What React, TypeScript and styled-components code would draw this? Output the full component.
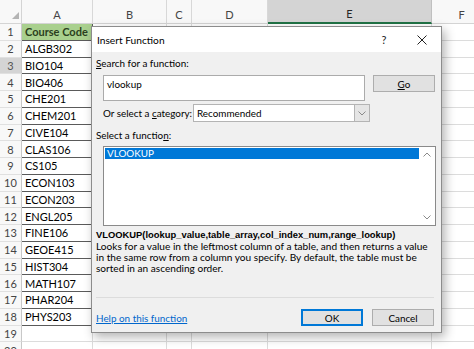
import React from "react";
import styled, { createGlobalStyle } from "styled-components";

const GlobalStyle = createGlobalStyle`
  html, body {
    margin: 0;
    padding: 0;
    background: #ffffff;
    overflow: hidden;
  }
  body {
    font-family: Lato, "Liberation Sans", sans-serif;
  }
`;

const UI_FONT = `Lato, "Noto Sans", "Liberation Sans", sans-serif`;

const columns = [
  { key: "A", width: 71 },
  { key: "B", width: 74 },
  { key: "C", width: 25 },
  { key: "D", width: 76 },
  { key: "E", width: 164 },
  { key: "F", width: 60 },
];

const courseCodes = [
  "ALGB302",
  "BIO104",
  "BIO406",
  "CHE201",
  "CHEM201",
  "CIVE104",
  "CLAS106",
  "CS105",
  "ECON103",
  "ECON203",
  "ENGL205",
  "FINE106",
  "GEOE415",
  "HIST304",
  "MATH107",
  "PHAR204",
  "PHYS203",
];

const descriptionLines = [
  "Looks for a value in the leftmost column of a table, and then returns a value",
  "in the same row from a column you specify. By default, the table must be",
  "sorted in an ascending order.",
];

const ACTIVE_ROW = 3;
const ACTIVE_COL = "E";
const ROW_COUNT = 20;

const Page = styled.div`
  position: relative;
  width: 474px;
  height: 349px;
  overflow: hidden;
`;

const Sheet = styled.div`
  display: grid;
  grid-template-columns: 22px ${columns.map((c) => `${c.width}px`).join(" ")};
  grid-template-rows: 24px repeat(${ROW_COUNT}, 16.75px);
  font-family: Lato, "Liberation Sans", sans-serif;
  font-size: 11px;
  color: #000;
`;

const Corner = styled.div`
  box-sizing: border-box;
  background: #f8f8f8;
  border-right: 1px solid #d4d4d4;
  border-bottom: 1px solid #d4d4d4;
  display: flex;
  align-items: flex-end;
  justify-content: flex-end;
  padding: 0 2px 4px 0;
`;

const ColHead = styled.div<{ $active?: boolean }>`
  box-sizing: border-box;
  background: ${(p) => (p.$active ? "#d4d4d4" : "#f8f8f8")};
  border-right: 1px solid ${(p) => (p.$active ? "#c0c0c0" : "#d8d8d8")};
  border-bottom: ${(p) => (p.$active ? "2px solid #217346" : "1px solid #d4d4d4")};
  color: ${(p) => (p.$active ? "#262626" : "#444444")};
  display: flex;
  align-items: center;
  justify-content: center;
  padding-top: 5px;
`;

const RowHead = styled.div<{ $active?: boolean }>`
  box-sizing: border-box;
  background: ${(p) => (p.$active ? "#d4d4d4" : "#f8f8f8")};
  border-right: 1px solid #c8c8c8;
  border-bottom: 1px solid #e0e0e0;
  color: ${(p) => (p.$active ? "#555555" : "#444444")};
  display: flex;
  align-items: center;
  justify-content: center;
`;

const Cell = styled.div<{ $boxed?: boolean; $header?: boolean }>`
  box-sizing: border-box;
  border-right: 1px solid ${(p) => (p.$boxed ? "#5a5a5a" : "#dcdcdc")};
  border-bottom: 1px solid ${(p) => (p.$boxed ? "#5a5a5a" : "#dcdcdc")};
  background: ${(p) => (p.$header ? "#a9d08e" : "#ffffff")};
  font-weight: ${(p) => (p.$header ? 700 : 400)};
  color: ${(p) => (p.$header ? "#2b3f20" : "#000000")};
  display: flex;
  align-items: center;
  padding-left: 3px;
  white-space: nowrap;
  overflow: hidden;
`;

/* ---------- dialog ---------- */

const Dialog = styled.div`
  position: absolute;
  left: 91px;
  top: 26px;
  width: 351px;
  height: 307px;
  box-sizing: border-box;
  border: 1px solid #8c8c8c;
  background: #f0f0f0;
  box-shadow: 3px 4px 10px rgba(0, 0, 0, 0.3);
  display: flex;
  flex-direction: column;
  font-family: ${UI_FONT};
  font-size: 9.9px;
  color: #000;
`;

const TitleBar = styled.div`
  height: 25px;
  background: #ffffff;
  display: flex;
  align-items: center;
  padding-left: 5px;
  font-size: 10.2px;
`;

const Title = styled.span`
  flex: 1;
`;

const TitleButton = styled.span`
  width: 38px;
  display: flex;
  justify-content: center;
  align-items: center;
  font-size: 11px;
  color: #222;
`;

const Body = styled.div`
  flex: 1;
  display: flex;
  flex-direction: column;
  padding: 0 6px 6px 4px;
`;

const Label = styled.div<{ $top: number }>`
  line-height: 12px;
  margin-top: ${(p) => p.$top}px;
`;

const Key = styled.span`
  text-decoration: underline;
  text-underline-offset: 1px;
`;

const SearchRow = styled.div`
  display: flex;
  align-items: flex-start;
  gap: 8px;
  margin-top: 6px;
  padding-left: 7px;
`;

const SearchBox = styled.div`
  flex: 1;
  height: 26px;
  box-sizing: border-box;
  background: #ffffff;
  border: 1px solid #ababab;
  padding: 2px 3px;
  line-height: 12px;
`;

const Button = styled.div<{ $default?: boolean }>`
  width: 62px;
  height: 17px;
  box-sizing: border-box;
  background: #e1e1e1;
  border: 1px solid ${(p) => (p.$default ? "#0078d7" : "#adadad")};
  box-shadow: ${(p) => (p.$default ? "inset 0 0 0 1px #0078d7" : "none")};
  display: flex;
  align-items: center;
  justify-content: center;
`;

const CategoryRow = styled.div`
  display: flex;
  align-items: center;
  margin-top: 3px;
  padding-left: 7px;
  width: 267px;
`;

const CategoryLabel = styled.span`
  width: 90px;
`;

const Select = styled.div`
  flex: 1;
  height: 18px;
  box-sizing: border-box;
  background: #ffffff;
  border: 1px solid #b4b4b4;
  display: flex;
  align-items: center;
  padding-left: 3px;
`;

const SelectText = styled.span`
  flex: 1;
`;

const SelectArrow = styled.span`
  width: 14px;
  height: 100%;
  background: #e5e5e5;
  border-left: 1px solid #b4b4b4;
  display: flex;
  align-items: center;
  justify-content: center;
`;

const ListBox = styled.div`
  margin: 5px 0 0 7px;
  width: 333px;
  height: 80px;
  box-sizing: border-box;
  background: #ffffff;
  border: 1px solid #8a8a8a;
  display: flex;
  padding: 1px;
`;

const ListItems = styled.div`
  flex: 1;
`;

const ListItem = styled.div<{ $selected?: boolean }>`
  height: 11px;
  line-height: 11px;
  padding-left: 2px;
  background: ${(p) => (p.$selected ? "#0078d7" : "transparent")};
  color: ${(p) => (p.$selected ? "#ffffff" : "#000")};
`;

const ScrollBar = styled.div`
  width: 15px;
  display: flex;
  flex-direction: column;
  justify-content: space-between;
  align-items: center;
  padding: 4px 0 4px;
`;

const Syntax = styled.div`
  margin-top: 3px;
  line-height: 12px;
  font-family: "Liberation Sans", Arial, sans-serif;
  font-size: 9.4px;
  font-weight: 700;
  white-space: nowrap;
`;

const DescriptionLine = styled.div`
  line-height: 11px;
  font-size: 10.1px;
  white-space: nowrap;
`;

const Footer = styled.div`
  margin-top: auto;
  border-top: 1px solid #dcdcdc;
  padding-top: 11px;
  display: flex;
  align-items: center;
  gap: 9px;
  margin-right: 1px;
`;

const HelpLink = styled.a`
  flex: 1;
  color: #0066cc;
  text-decoration: underline;
  text-underline-offset: 1px;
  cursor: pointer;
`;

function Chevron({ up }: { up?: boolean }) {
  return (
    <svg width="8" height="5" viewBox="0 0 8 5">
      <path
        d={up ? "M0.5 4.5 L4 1 L7.5 4.5" : "M0.5 0.5 L4 4 L7.5 0.5"}
        fill="none"
        stroke="#8a8a8a"
        strokeWidth="1"
      />
    </svg>
  );
}

function CloseIcon() {
  return (
    <svg width="10" height="10" viewBox="0 0 10 10">
      <path d="M0.5 0.5 L9.5 9.5 M9.5 0.5 L0.5 9.5" stroke="#222" strokeWidth="1" />
    </svg>
  );
}

function InsertFunctionDialog() {
  return (
    <Dialog>
      <TitleBar>
        <Title>Insert Function</Title>
        <TitleButton>?</TitleButton>
        <TitleButton>
          <CloseIcon />
        </TitleButton>
      </TitleBar>
      <Body>
        <Label $top={5}>
          <Key>S</Key>earch for a function:
        </Label>
        <SearchRow>
          <SearchBox>vlookup</SearchBox>
          <Button>
            <span>
              <Key>G</Key>o
            </span>
          </Button>
        </SearchRow>
        <CategoryRow>
          <CategoryLabel>
            Or select a <Key>c</Key>ategory:
          </CategoryLabel>
          <Select>
            <SelectText>Recommended</SelectText>
            <SelectArrow>
              <Chevron />
            </SelectArrow>
          </Select>
        </CategoryRow>
        <Label $top={7}>
          Select a functio<Key>n</Key>:
        </Label>
        <ListBox>
          <ListItems>
            <ListItem $selected>VLOOKUP</ListItem>
          </ListItems>
          <ScrollBar>
            <Chevron up />
            <Chevron />
          </ScrollBar>
        </ListBox>
        <Syntax>VLOOKUP(lookup_value,table_array,col_index_num,range_lookup)</Syntax>
        {descriptionLines.map((line) => (
          <DescriptionLine key={line}>{line}</DescriptionLine>
        ))}
        <Footer>
          <HelpLink>Help on this function</HelpLink>
          <Button $default>OK</Button>
          <Button>Cancel</Button>
        </Footer>
      </Body>
    </Dialog>
  );
}

function Spreadsheet() {
  const rows = Array.from({ length: ROW_COUNT }, (_, i) => i + 1);
  return (
    <Sheet>
      <Corner>
        <svg width="7" height="7" viewBox="0 0 7 7">
          <polygon points="7,0 7,7 0,7" fill="#b4b4b4" />
        </svg>
      </Corner>
      {columns.map((c) => (
        <ColHead key={c.key} $active={c.key === ACTIVE_COL}>
          {c.key}
        </ColHead>
      ))}
      {rows.map((r) => (
        <React.Fragment key={r}>
          <RowHead $active={r === ACTIVE_ROW}>{r}</RowHead>
          {columns.map((c) => {
            const inTable = c.key === "A" && r <= courseCodes.length + 1;
            let text = "";
            if (c.key === "A" && r === 1) text = "Course Code";
            else if (inTable) text = courseCodes[r - 2];
            return (
              <Cell key={c.key} $boxed={inTable} $header={c.key === "A" && r === 1}>
                {text}
              </Cell>
            );
          })}
        </React.Fragment>
      ))}
    </Sheet>
  );
}

export default function App() {
  return (
    <Page>
      <GlobalStyle />
      <Spreadsheet />
      <InsertFunctionDialog />
    </Page>
  );
}
